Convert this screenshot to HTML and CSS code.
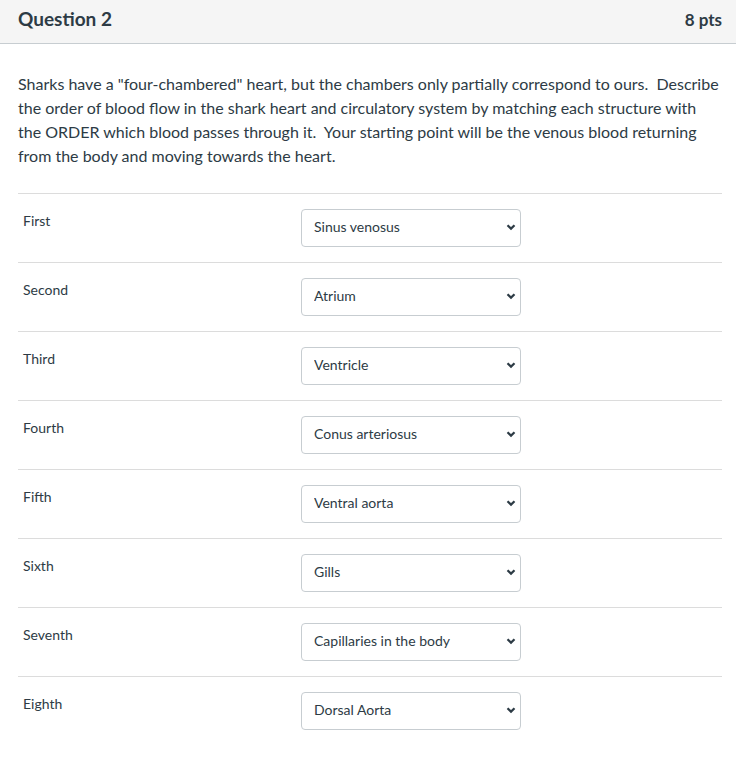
FILE: index.html
```html
<!DOCTYPE html>
<html>
<head>
<meta charset="utf-8">
<link rel="stylesheet" href="styles.css">
</head>
<body>
<div class="question">
  <div class="header">
    <span class="title">Question 2</span>
    <span class="pts">8 pts</span>
  </div>
  <div class="content">
    <p class="text">Sharks have a "four-chambered" heart, but the chambers only partially correspond to ours.&nbsp; Describe the order of blood flow in the shark heart and circulatory system by matching each structure with the ORDER which blood passes through it.&nbsp; Your starting point will be the venous blood returning from the body and moving towards the heart.</p>
    <div class="rows">
      <div class="row"><div class="label">First</div><div class="sel"><select><option>Sinus venosus</option></select><svg class="chev" viewBox="0 0 10 8"><path d="M1.5 2.2 L5 5.6 L8.5 2.2" /></svg></div></div>
      <div class="row"><div class="label">Second</div><div class="sel"><select><option>Atrium</option></select><svg class="chev" viewBox="0 0 10 8"><path d="M1.5 2.2 L5 5.6 L8.5 2.2" /></svg></div></div>
      <div class="row"><div class="label">Third</div><div class="sel"><select><option>Ventricle</option></select><svg class="chev" viewBox="0 0 10 8"><path d="M1.5 2.2 L5 5.6 L8.5 2.2" /></svg></div></div>
      <div class="row"><div class="label">Fourth</div><div class="sel"><select><option>Conus arteriosus</option></select><svg class="chev" viewBox="0 0 10 8"><path d="M1.5 2.2 L5 5.6 L8.5 2.2" /></svg></div></div>
      <div class="row"><div class="label">Fifth</div><div class="sel"><select><option>Ventral aorta</option></select><svg class="chev" viewBox="0 0 10 8"><path d="M1.5 2.2 L5 5.6 L8.5 2.2" /></svg></div></div>
      <div class="row"><div class="label">Sixth</div><div class="sel"><select><option>Gills</option></select><svg class="chev" viewBox="0 0 10 8"><path d="M1.5 2.2 L5 5.6 L8.5 2.2" /></svg></div></div>
      <div class="row"><div class="label">Seventh</div><div class="sel"><select><option>Capillaries in the body</option></select><svg class="chev" viewBox="0 0 10 8"><path d="M1.5 2.2 L5 5.6 L8.5 2.2" /></svg></div></div>
      <div class="row"><div class="label">Eighth</div><div class="sel"><select><option>Dorsal Aorta</option></select><svg class="chev" viewBox="0 0 10 8"><path d="M1.5 2.2 L5 5.6 L8.5 2.2" /></svg></div></div>
    </div>
  </div>
</div>
</body>
</html>
```
FILE: styles.css
```css
html, body {
  margin: 0;
  padding: 0;
  background: #fff;
}
body {
  font-family: Lato, "Open Sans", sans-serif;
  color: #2d3b45;
}
.question {
  width: 736px;
}
.header {
  box-sizing: border-box;
  background: #f5f5f5;
  border-bottom: 1px solid #c7cdd1;
  display: flex;
  align-items: center;
  justify-content: space-between;
  padding: 0 14px 0 18px;
  height: 44px;
}
.title {
  font-size: 19px;
  font-weight: 700;
  margin-top: -6px;
}
.pts {
  font-size: 17px;
  font-weight: 700;
  margin-top: -4px;
}
.content {
  padding: 0 14px 0 18px;
}
.text {
  margin: 28px 0 25px;
  font-size: 16px;
  line-height: 24px;
}
.row {
  border-top: 1px solid #dcdcdc;
  display: grid;
  grid-template-columns: 278px 220px;
  padding: 15px 0 15px 5px;
  height: 38px;
}
.label {
  font-size: 14px;
  line-height: 20px;
  margin-top: 2px;
}
.sel {
  position: relative;
  width: 220px;
  height: 38px;
}
.sel select {
  appearance: none;
  -webkit-appearance: none;
  width: 220px;
  height: 38px;
  box-sizing: border-box;
  border: 1px solid #c7cdd1;
  border-radius: 4px;
  background: #fff;
  font-family: Lato, "Open Sans", sans-serif;
  font-size: 14px;
  color: #2d3b45;
  padding: 0 0 3px 12px;
  margin: 0;
}
.chev {
  position: absolute;
  right: 5px;
  top: 14px;
  width: 10px;
  height: 8px;
  pointer-events: none;
}
.chev path {
  fill: none;
  stroke: #2d3b45;
  stroke-width: 2.2;
}
```
